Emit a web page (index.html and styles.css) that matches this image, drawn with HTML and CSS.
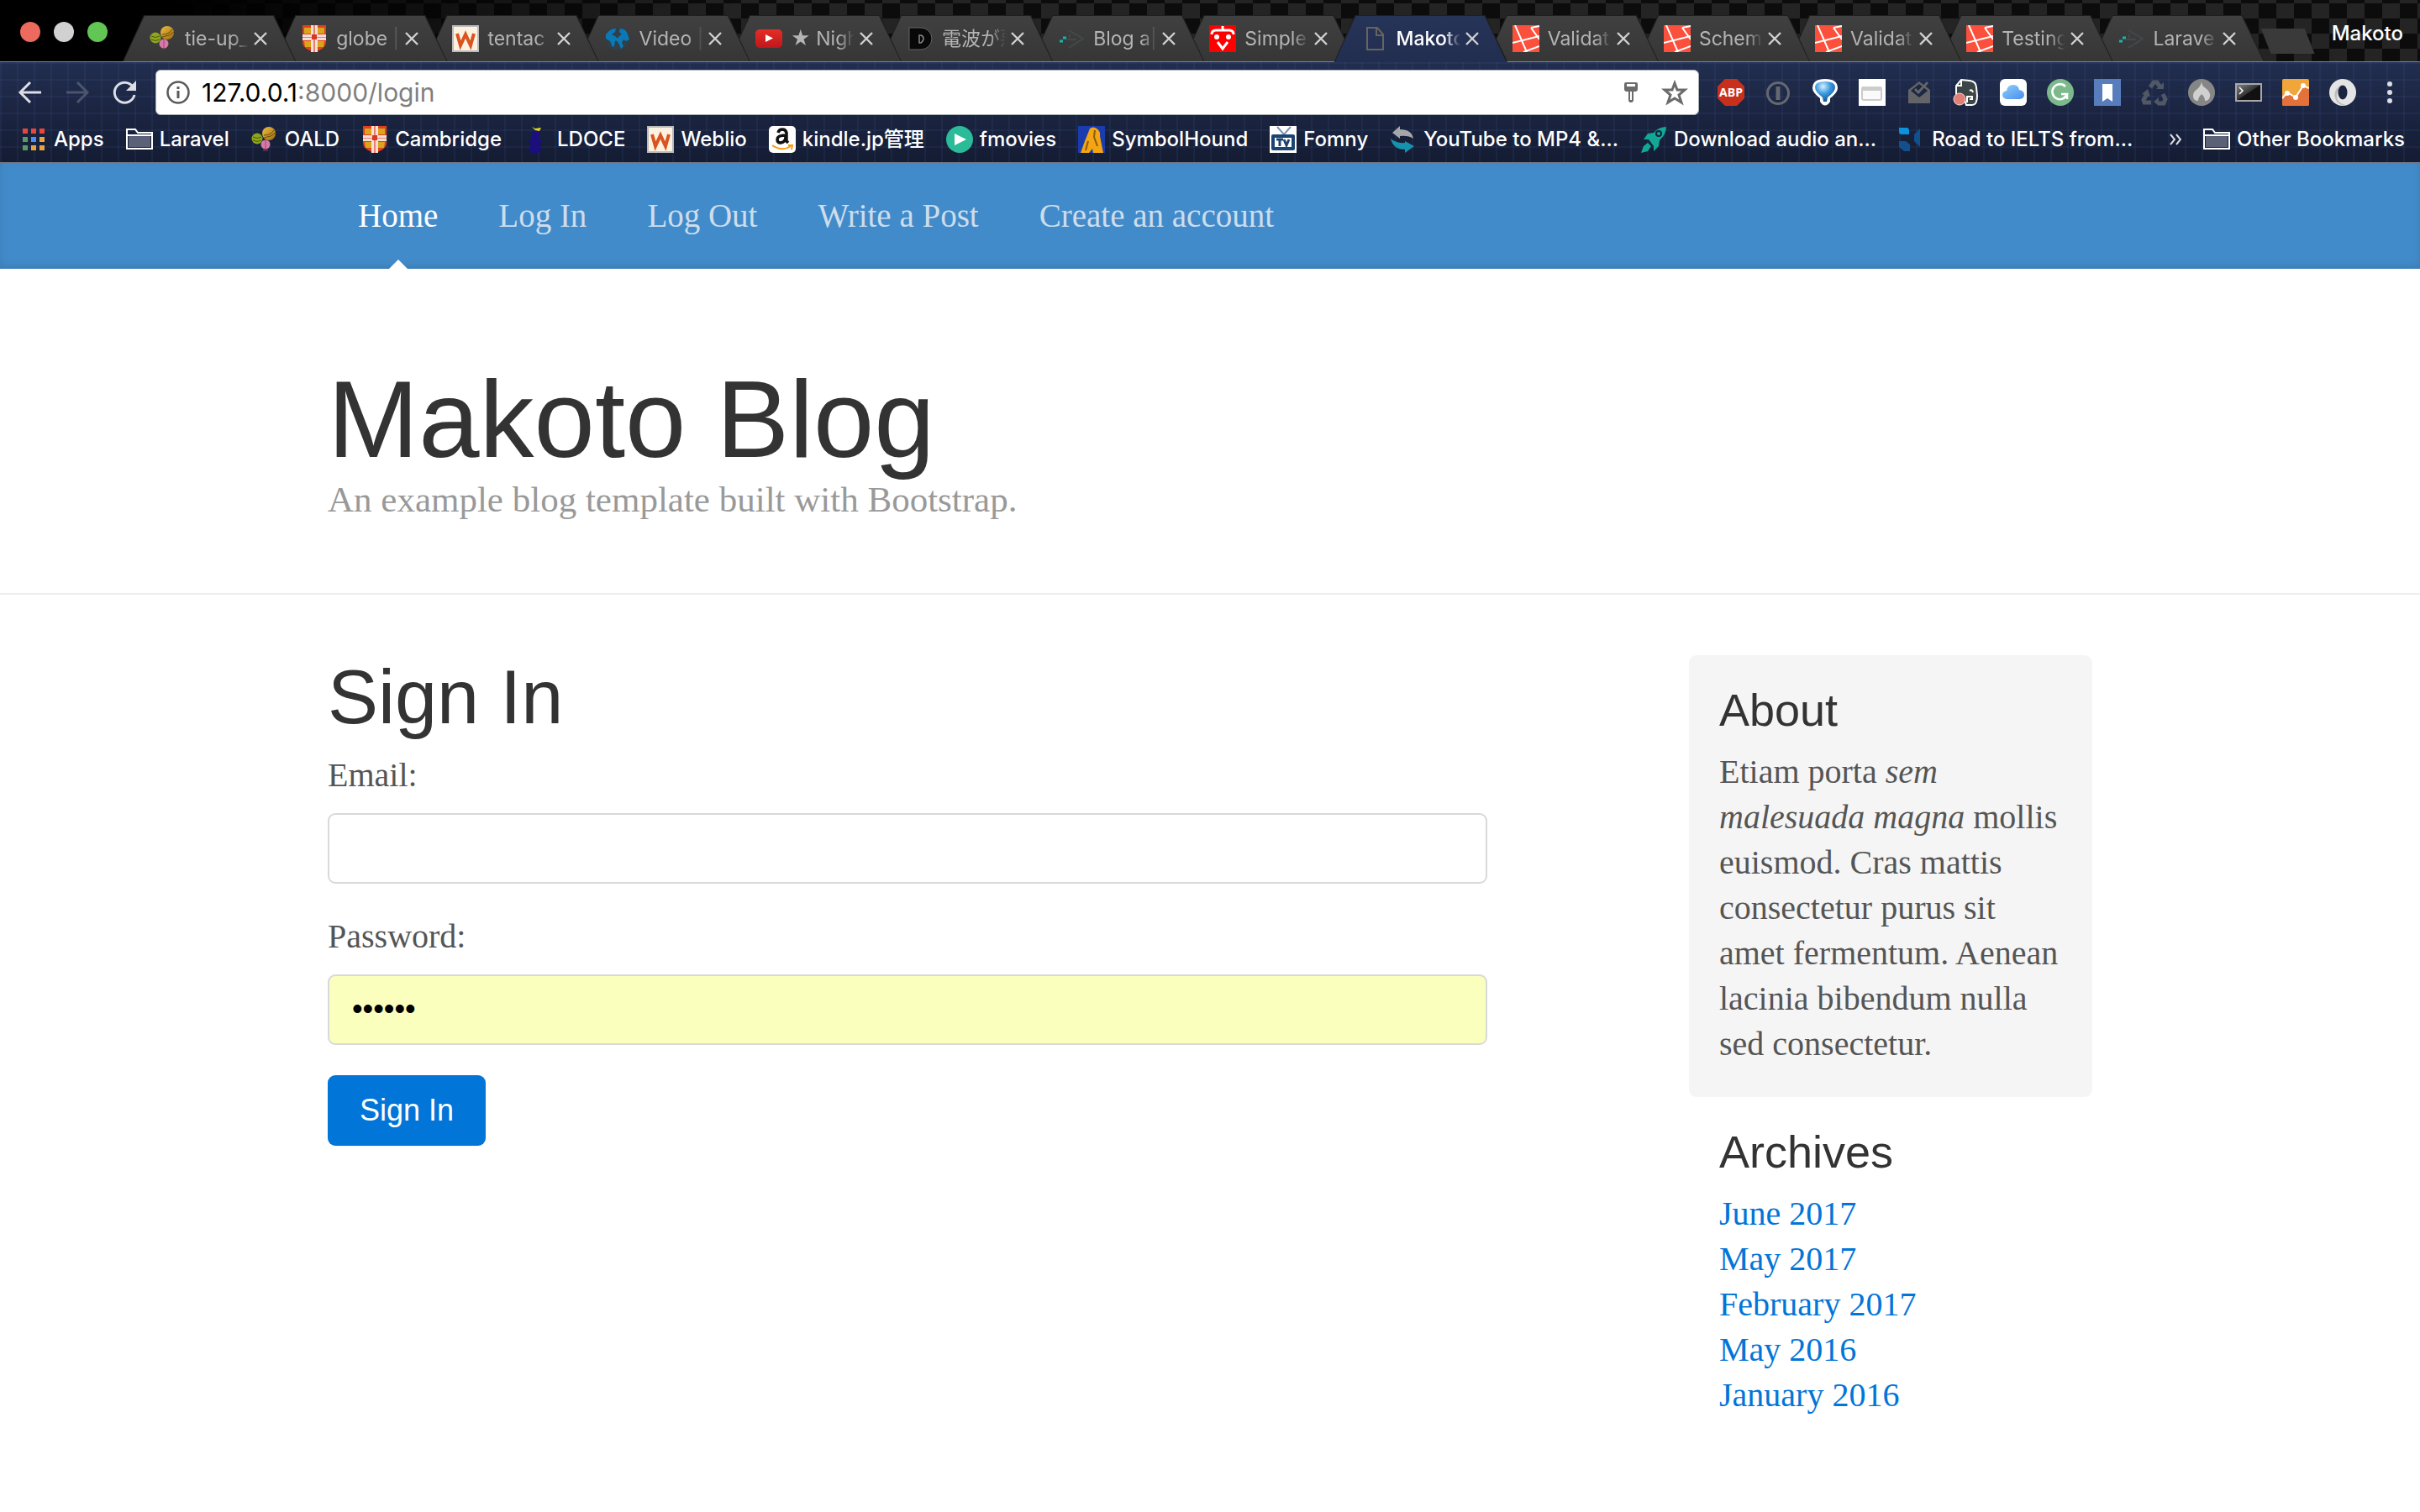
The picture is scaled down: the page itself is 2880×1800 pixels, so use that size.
FILE: index.html
```html
<!DOCTYPE html>
<html lang="en">
<head>
<meta charset="utf-8">
<title>Makoto Blog</title>
<link rel="stylesheet" href="styles.css">
</head>
<body>
<svg class="defs" aria-hidden="true">
  <defs>
    <linearGradient id="g-gold" x1="0" y1="0" x2="1" y2="1"><stop offset="0" stop-color="#f0c040"/><stop offset="1" stop-color="#9a6a10"/></linearGradient>
    <linearGradient id="g-red" x1="0" y1="0" x2="0" y2="1"><stop offset="0" stop-color="#e52d27"/><stop offset="1" stop-color="#bf171d"/></linearGradient>
    <linearGradient id="g-term" x1="0" y1="0" x2="1" y2="1"><stop offset="0" stop-color="#888"/><stop offset=".5" stop-color="#333"/><stop offset=".52" stop-color="#111"/><stop offset="1" stop-color="#111"/></linearGradient>
    <linearGradient id="g-cloud" x1="0" y1="0" x2="1" y2="1"><stop offset="0" stop-color="#8fd0f8"/><stop offset="1" stop-color="#4a8df0"/></linearGradient>
    <radialGradient id="g-drop" cx=".4" cy=".25" r=".8"><stop offset="0" stop-color="#d8f0ff"/><stop offset=".45" stop-color="#3c9be0"/><stop offset="1" stop-color="#0a4a90"/></radialGradient>
  </defs>
  <symbol id="i-balls" viewBox="0 0 32 32"><circle cx="21" cy="9" r="8" fill="url(#g-gold)"/><path d="M15 11q8 0 12-6M15 14q9-1 14-6" stroke="#6b4a08" fill="none"/><circle cx="7" cy="15" r="6.500" fill="#8fa51c"/><path d="M2 13q5 3 10 0M2 17q5 3 10 0" stroke="#4d5c08" fill="none"/><circle cx="17" cy="22" r="5.500" fill="#d77aa8"/><path d="M17 17v10" stroke="#a34677"/><path d="M14 29h6" stroke="#5a2c46" stroke-width="2"/></symbol>
  <symbol id="i-shield" viewBox="0 0 32 32"><path d="M2 0h28v20q0 8-14 12Q2 28 2 20z" fill="#e2401c"/><path d="M4 3h8v7H4zM20 3h8v7h-8zM4 19h8v7H5zM20 19h8l-1 7h-7z" fill="#d8a51c"/><path d="M12 0h8v32h-8zM2 11h28v7H2z" fill="#f6ded6"/><path d="M15 0h2v32h-2zM2 14h28v1H2z" fill="#e88070"/><path d="M13 11h6v6h-6z" fill="#d63a22"/></symbol>
  <symbol id="i-w" viewBox="0 0 32 32"><rect x="1" y="1" width="30" height="30" fill="#fdf1e2" stroke="#bbb" stroke-width="2"/><path d="M6 10l4 14 6-13 6 13 4-14" fill="none" stroke="#d9541e" stroke-width="4"/></symbol>
  <symbol id="i-globe" viewBox="0 0 32 32"><circle cx="16" cy="16" r="14" fill="#303f4a"/><path d="M2 11q6-8 12-7l-1 4-4 3 4 2 3 3-3 3-1 6-2 1-3-7-5-3zM19 4q7 0 9 7l2 6-4 2-3-2-2 4 2 4-3 3-3-7-3-3 4-5 3-2-3-3z" fill="#0b79b5"/></symbol>
  <symbol id="i-yt" viewBox="0 0 32 32"><rect y="5" width="32" height="22" rx="5" fill="url(#g-red)"/><path d="M12 11v9l9-4.500z" fill="#fff"/></symbol>
  <symbol id="i-d" viewBox="0 0 32 32"><path d="M3 3h14a13 13 0 0 1 0 26H3z" fill="#080808" stroke="#666"/><path d="M15 12h2q3 1 3 4t-3 5h-2z" fill="none" stroke="#888" stroke-width="1.500"/></symbol>
  <symbol id="i-arrow" viewBox="0 0 32 32"><path d="M13 6l17 10-17 11M14 11v4M10 17h12" fill="none" stroke="#444849" stroke-width="2"/><path d="M2 19h4M6 15h4" stroke="#12b5b0" stroke-width="3"/></symbol>
  <symbol id="i-face" viewBox="0 0 32 32"><path d="M0 0h32v32H0z" fill="red"/><path d="M3 11q0-5 5-5h16q5 0 5 5M16 1v5M10 20l6 8 6-8" fill="none" stroke="#fff" stroke-width="3"/><circle cx="9" cy="14" r="3" fill="#fff"/><circle cx="23" cy="14" r="3" fill="#fff"/></symbol>
  <symbol id="i-page" viewBox="0 0 32 32"><path d="M7 3h12l7 8v18H7zM18 3v9h8" fill="none" stroke="#66645f" stroke-width="2"/></symbol>
  <symbol id="i-laravel" viewBox="0 0 32 32"><path d="M0 0h32v32H0z" fill="#fb503b"/><path d="M3 0l14 32M0 21l32-8M22 3l10 14M22 3l10-2M13 32l19-7" fill="none" stroke="#fff" stroke-width="2"/></symbol>
  <symbol id="i-x" viewBox="0 0 16 16"><path d="M1 1l14 14M15 1L1 15" stroke="#d0d0d0" stroke-width="2.400"/></symbol>
  <symbol id="i-folder" viewBox="0 0 32 32"><path d="M1 27V4h10l3 4h17v19z" fill="none" stroke="#fff" stroke-width="2"/><path d="M3 12h26v13H3z" fill="#5b6277"/><path d="M1 11h30" stroke="#fff" stroke-width="2"/></symbol>
  <symbol id="i-apps" viewBox="0 0 32 32"><path d="M3 3h6v6H3zM13 3h6v6h-6zM23 3h6v6h-6z" fill="#e8453c"/><path d="M3 13h6v6H3zM3 23h6v6H3z" fill="#589b63"/><path d="M13 13h6v6h-6z" fill="#4a8df6"/><path d="M23 13h6v6h-6zM13 23h6v6h-6zM23 23h6v6h-6z" fill="#e8a33c"/></symbol>
  <symbol id="i-ship" viewBox="0 0 32 32"><path d="M10 7h10l-2 7 4 3-3 6 3 4-4 5h-8l-5-4 4-4-3-5 4-3z" fill="#1a0f7c"/><path d="M10 1l4 2 7-1-2 4-5-1z" fill="#e8d820"/></symbol>
  <symbol id="i-amazon" viewBox="0 0 32 32"><rect width="32" height="32" rx="5" fill="#fff"/><path d="M11 8q1-4 5-4t5 4v10l2 2M20 11q-10 0-10 5 0 4 4 4 6-1 6-7" fill="none" stroke="#111" stroke-width="3.500"/><path d="M4 23q12 8 22 1M23 23h5l-1 5" fill="none" stroke="#f79b12" stroke-width="2"/></symbol>
  <symbol id="i-play" viewBox="0 0 32 32"><circle cx="16" cy="16" r="16" fill="#2bbb98"/><path d="M10 9v14l14-7z" fill="#fff"/></symbol>
  <symbol id="i-hound" viewBox="0 0 32 32"><path d="M0 0h32v32H0z" fill="#1a3cae"/><path d="M14 3q4-3 8 0 5 3 4 9l4 20H18l-1-5-4 5H3l5-14z" fill="#f3a512"/><path d="M20 5l-1 8 4 11M12 18l-3 11" fill="none" stroke="#8a5a10" stroke-width="2"/></symbol>
  <symbol id="i-tv" viewBox="0 0 32 32"><path d="M0 0h32v32H0z" fill="#fff"/><path d="M9 1l8 9 8-9" fill="none" stroke="#7b95b4" stroke-width="2"/><rect x="2" y="10" width="28" height="19" rx="2" fill="#1d4470"/><path d="M6 14h20v11H6z" fill="#fff"/><path d="M8 16h8M12 16v8M17 16l3 7 3-7" fill="none" stroke="#1d4470" stroke-width="3"/></symbol>
  <symbol id="i-swap" viewBox="0 0 32 32"><path d="M3 8l9-8v4q14 0 16 11-6-4-16-3v3z" fill="#a5a7aa"/><path d="M29 24l-11 8v-4Q4 28 1 15q7 6 17 5v-2z" fill="#1792ac"/></symbol>
  <symbol id="i-rocket" viewBox="0 0 32 32"><path d="M31 1q-9 0-15 7L9 9l-5 7h6l6 8v6l6-6 1-7q8-7 8-16zM9 20l4 4-4 6-8 2 3-8z" fill="#13a795"/><circle cx="22" cy="9" r="3" fill="none" stroke="#17223d" stroke-width="2"/></symbol>
  <symbol id="i-road" viewBox="0 0 32 32"><path d="M1 2h10l2 2v6H3L1 8z" fill="#0c92dc"/><path d="M1 18h8l5 4v8H7l-6-5zM26 3v22l-7-7v-8z" fill="#124f8c"/></symbol>
  <symbol id="i-abp" viewBox="0 0 32 32"><path d="M9 0h14l9 9v14l-9 9H9l-9-9V9z" fill="#c9301c"/><text x="16" y="21" text-anchor="middle" class="abp">ABP</text></symbol>
  <symbol id="i-onep" viewBox="0 0 32 32"><circle cx="16" cy="17" r="12.500" fill="none" stroke="#65686f" stroke-width="3"/><path d="M16 9v16" stroke="#65686f" stroke-width="5"/></symbol>
  <symbol id="i-drop" viewBox="0 0 32 32"><path d="M16 0q15 0 15 11 0 5-9 12v4q-6 9-12 0v-4Q1 16 1 11 1 0 16 0z" fill="#fff"/><path d="M16 3q12 0 12 7 0 5-9 12l-1 5h-4l-1-5Q4 15 4 10q0-7 12-7z" fill="url(#g-drop)"/></symbol>
  <symbol id="i-window" viewBox="0 0 32 32"><path d="M0 0h32v32H0z" fill="#fff"/><rect x="4" y="10" width="23" height="15" rx="2" fill="#fafafa" stroke="#ccc" stroke-width="2"/><path d="M4 9h23v5H4z" fill="#ccc"/></symbol>
  <symbol id="i-inbox" viewBox="0 0 32 32"><path d="M3 13L16 3l13 10v16H3z" fill="#626467"/><path d="M6 14l10-8 10 8-10 8z" fill="#1d2742"/><path d="M11 12l4 4L26 4" fill="none" stroke="#626467" stroke-width="3"/></symbol>
  <symbol id="i-elephant" viewBox="0 0 32 32"><path d="M10 1l10 1q8 1 8 8l1 10q0 11-6 11h-7l-2-6-10-4V8z" fill="#3c4646" stroke="#fff" stroke-width="2"/><path d="M4 8h6V1M17 28v-7h6v3h-3" fill="none" stroke="#fff" stroke-width="2"/><path d="M20 14q3-2 4 2" stroke="#fff" fill="none" stroke-width="2"/><circle cx="8" cy="24" r="7" fill="#e27f77" stroke="#f6dcda"/></symbol>
  <symbol id="i-cloud" viewBox="0 0 32 32"><rect width="32" height="32" rx="6" fill="#fff"/><path d="M8 24q-5-1-5-5 0-4 5-5 1-7 8-7 6 0 7 6 6 1 6 6 0 4-5 5z" fill="url(#g-cloud)"/></symbol>
  <symbol id="i-gram" viewBox="0 0 32 32"><circle cx="16" cy="16" r="16" fill="#7cba8c"/><path d="M22 9a9 9 0 1 0 2 9h-7M24 18v6" fill="none" stroke="#fff" stroke-width="2.600"/></symbol>
  <symbol id="i-mark" viewBox="0 0 32 32"><path d="M0 0h32v32H0z" fill="#587dbd"/><path d="M10 6h12v21l-6-4-6 4z" fill="#fff"/></symbol>
  <symbol id="i-recycle" viewBox="0 0 32 32"><path d="M11 10l4-6h4l4 6M26 18l3 6-2 5h-6M12 28H4l-1-3 4-7" fill="none" stroke="#505866" stroke-width="5"/><path d="M18 12h9V4zM21 22v10l-6-5zM1 18l7-6 3 9z" fill="#505866"/></symbol>
  <symbol id="i-fire" viewBox="0 0 32 32"><circle cx="16" cy="16" r="16" fill="#868686"/><path d="M16 3q0 5 5 8 6 5 5 10-1 5-6 5 0-5-4-8-4 4-4 8-6 0-6-6 0-5 5-8 4-3 5-9z" fill="#d0d0d0"/></symbol>
  <symbol id="i-term" viewBox="0 0 32 32"><path d="M1 6h30v20H1z" fill="url(#g-term)" stroke="#a8a8a8" stroke-width="2"/><path d="M5 10l4 4-4 4" fill="none" stroke="#fff" stroke-width="1.500"/></symbol>
  <symbol id="i-chart" viewBox="0 0 32 32"><rect width="32" height="32" rx="2" fill="#f0a63a"/><path d="M0 24l6-8 10 6 9-14 7 3v19q0 2-2 2H2q-2 0-2-2z" fill="#e5713a"/><path d="M0 23l6-7 10 6 9-14 7 3" fill="none" stroke="#fff" stroke-width="2"/><circle cx="6" cy="17" r="3" fill="#fff"/><circle cx="16" cy="22" r="3" fill="#fff"/><circle cx="25" cy="8" r="3" fill="#fff"/></symbol>
  <symbol id="i-ring" viewBox="0 0 32 32"><circle cx="16" cy="16" r="16" fill="#e4e4e4"/><path d="M14 7q-12 8-5 20 4 5 10 4Q2 26 14 7z" fill="#bdbdbd"/><ellipse cx="16" cy="16" rx="5.500" ry="8.500" fill="#1b2540"/></symbol>
</svg>

<div class="browser">
  <div class="tabstrip">
    <div class="lights"><button class="light red" aria-label="Close"></button><button class="light gray" aria-label="Minimize"></button><button class="light green" aria-label="Zoom"></button></div>
    <div class="tabs">
      <div class="tab first"><svg class="ico"><use href="#i-balls"/></svg><span class="tab-title">tie-up_</span><button class="close" aria-label="Close tab"><svg><use href="#i-x"/></svg></button></div>
      <div class="tab"><svg class="ico"><use href="#i-shield"/></svg><span class="tab-title">globe |</span><button class="close" aria-label="Close tab"><svg><use href="#i-x"/></svg></button></div>
      <div class="tab"><svg class="ico"><use href="#i-w"/></svg><span class="tab-title">tentac</span><button class="close" aria-label="Close tab"><svg><use href="#i-x"/></svg></button></div>
      <div class="tab"><svg class="ico"><use href="#i-globe"/></svg><span class="tab-title">Video |</span><button class="close" aria-label="Close tab"><svg><use href="#i-x"/></svg></button></div>
      <div class="tab"><svg class="ico"><use href="#i-yt"/></svg><span class="tab-title">★ Nigh</span><button class="close" aria-label="Close tab"><svg><use href="#i-x"/></svg></button></div>
      <div class="tab"><svg class="ico"><use href="#i-d"/></svg><span class="tab-title">電波が悪</span><button class="close" aria-label="Close tab"><svg><use href="#i-x"/></svg></button></div>
      <div class="tab"><svg class="ico"><use href="#i-arrow"/></svg><span class="tab-title">Blog a|</span><button class="close" aria-label="Close tab"><svg><use href="#i-x"/></svg></button></div>
      <div class="tab"><svg class="ico"><use href="#i-face"/></svg><span class="tab-title">Simple</span><button class="close" aria-label="Close tab"><svg><use href="#i-x"/></svg></button></div>
      <div class="tab active"><svg class="ico"><use href="#i-page"/></svg><span class="tab-title">Makoto</span><button class="close" aria-label="Close tab"><svg><use href="#i-x"/></svg></button></div>
      <div class="tab"><svg class="ico"><use href="#i-laravel"/></svg><span class="tab-title">Validat</span><button class="close" aria-label="Close tab"><svg><use href="#i-x"/></svg></button></div>
      <div class="tab"><svg class="ico"><use href="#i-laravel"/></svg><span class="tab-title">Schem</span><button class="close" aria-label="Close tab"><svg><use href="#i-x"/></svg></button></div>
      <div class="tab"><svg class="ico"><use href="#i-laravel"/></svg><span class="tab-title">Validat</span><button class="close" aria-label="Close tab"><svg><use href="#i-x"/></svg></button></div>
      <div class="tab"><svg class="ico"><use href="#i-laravel"/></svg><span class="tab-title">Testing</span><button class="close" aria-label="Close tab"><svg><use href="#i-x"/></svg></button></div>
      <div class="tab"><svg class="ico"><use href="#i-arrow"/></svg><span class="tab-title">Larave</span><button class="close" aria-label="Close tab"><svg><use href="#i-x"/></svg></button></div>
    </div>
    <button class="newtab" aria-label="New tab"></button>
    <span class="profile">Makoto</span>
  </div>

  <div class="chrome">
    <div class="toolbar">
      <div class="history">
        <button aria-label="Back"><svg viewBox="0 0 32 32"><path d="M29 16H5M16 4L4 16l12 12" fill="none" stroke="#dcdee4" stroke-width="3"/></svg></button>
        <button aria-label="Forward"><svg viewBox="0 0 32 32"><path d="M3 16h24M16 4l12 12-12 12" fill="none" stroke="#4b556d" stroke-width="3"/></svg></button>
        <button aria-label="Reload"><svg viewBox="0 0 32 32"><path d="M26 9a12 12 0 1 0 2 10" fill="none" stroke="#dcdee4" stroke-width="3"/><path d="M30 2v12H18z" fill="#dcdee4"/></svg></button>
      </div>
      <div class="omnibox">
        <svg class="info" viewBox="0 0 28 28"><circle cx="14" cy="14" r="12.500" fill="none" stroke="#5a5a5a" stroke-width="2.500"/><path d="M14 12v9M14 7v3" stroke="#5a5a5a" stroke-width="3"/></svg>
        <div class="url" role="textbox" aria-label="Address">127.0.0.1<span>:8000/login</span></div>
        <svg class="key" viewBox="0 0 32 32"><path d="M10 4h12q2 0 2 2v6q0 3-3 3h-2v10q0 3-3 3t-3-3V15h-2q-3 0-3-3V6q0-2 2-2zm1 2v3h10V6zm4 9v10h2V15z" fill="#6b6b6b" fill-rule="evenodd"/></svg>
        <svg class="star" viewBox="0 0 32 32"><path d="M16 5l3 8h9l-7 6 3 9-8-5-8 5 3-9-7-6h9z" fill="none" stroke="#6b6b6b" stroke-width="3"/></svg>
      </div>
      <div class="extensions">
        <svg class="ico"><use href="#i-abp"/></svg><svg class="ico"><use href="#i-onep"/></svg><svg class="ico"><use href="#i-drop"/></svg><svg class="ico"><use href="#i-window"/></svg><svg class="ico"><use href="#i-inbox"/></svg><svg class="ico"><use href="#i-elephant"/></svg><svg class="ico"><use href="#i-cloud"/></svg><svg class="ico"><use href="#i-gram"/></svg><svg class="ico"><use href="#i-mark"/></svg><svg class="ico"><use href="#i-recycle"/></svg><svg class="ico"><use href="#i-fire"/></svg><svg class="ico"><use href="#i-term"/></svg><svg class="ico"><use href="#i-chart"/></svg><svg class="ico"><use href="#i-ring"/></svg>
        <button aria-label="Menu"><svg class="ico" viewBox="0 0 32 32"><g fill="#dcdee4"><circle cx="16" cy="6" r="3"/><circle cx="16" cy="16" r="3"/><circle cx="16" cy="26" r="3"/></g></svg></button>
      </div>
    </div>
    <div class="bookmarks">
      <a href="#"><svg class="ico"><use href="#i-apps"/></svg>Apps</a>
      <a href="#"><svg class="ico"><use href="#i-folder"/></svg>Laravel</a>
      <a href="#"><svg class="ico"><use href="#i-balls"/></svg>OALD</a>
      <a href="#"><svg class="ico"><use href="#i-shield"/></svg>Cambridge</a>
      <a href="#"><svg class="ico"><use href="#i-ship"/></svg>LDOCE</a>
      <a href="#"><svg class="ico"><use href="#i-w"/></svg>Weblio</a>
      <a href="#"><svg class="ico"><use href="#i-amazon"/></svg>kindle.jp管理</a>
      <a href="#"><svg class="ico"><use href="#i-play"/></svg>fmovies</a>
      <a href="#"><svg class="ico"><use href="#i-hound"/></svg>SymbolHound</a>
      <a href="#"><svg class="ico"><use href="#i-tv"/></svg>Fomny</a>
      <a href="#"><svg class="ico"><use href="#i-swap"/></svg>YouTube to MP4 &amp;...</a>
      <a href="#"><svg class="ico"><use href="#i-rocket"/></svg>Download audio an...</a>
      <a href="#"><svg class="ico"><use href="#i-road"/></svg>Road to IELTS from...</a>
      <button class="more" aria-label="More bookmarks"><svg viewBox="0 0 14 14"><path d="M1 1l5 6-5 6M8 1l5 6-5 6" fill="none" stroke="#dcdee4" stroke-width="2"/></svg></button>
      <a href="#"><svg class="ico"><use href="#i-folder"/></svg>Other Bookmarks</a>
    </div>
  </div>
</div>

<nav class="masthead">
  <div class="container links">
    <a class="current" href="#">Home</a>
    <a href="#">Log In</a>
    <a href="#">Log Out</a>
    <a href="#">Write a Post</a>
    <a href="#">Create an account</a>
  </div>
</nav>

<header class="blog-header">
  <div class="container">
    <h1>Makoto Blog</h1>
    <p>An example blog template built with Bootstrap.</p>
  </div>
</header>

<div class="container columns">
  <main>
    <h2>Sign In</h2>
    <form>
      <label for="email">Email:</label>
      <input id="email" type="email">
      <label for="password">Password:</label>
      <input id="password" class="filled" type="password" value="secret">
      <button class="submit" type="button">Sign In</button>
    </form>
  </main>
  <aside>
    <section class="box inset">
      <h3>About</h3>
      <p>Etiam porta <em>sem malesuada magna</em> mollis euismod. Cras mattis consectetur purus sit amet fermentum. Aenean lacinia bibendum nulla sed consectetur.</p>
    </section>
    <section class="box">
      <h3>Archives</h3>
      <ul>
        <li><a href="#">June 2017</a></li>
        <li><a href="#">May 2017</a></li>
        <li><a href="#">February 2017</a></li>
        <li><a href="#">May 2016</a></li>
        <li><a href="#">January 2016</a></li>
      </ul>
    </section>
  </aside>
</div>
</body>
</html>
```
FILE: styles.css
```css
* { box-sizing: border-box; }

body {
  margin: 0;
  background: #fff;
  color: #555;
  font: 40px/54px "Liberation Serif", serif;
}

h1, h2, h3, p, ul { margin: 0; padding: 0; font-weight: 400; }
h1, h2, h3 { font-family: "Liberation Sans", sans-serif; color: #333; }
ul { list-style: none; }
a { color: #0275d8; text-decoration: none; }
button { border: 0; padding: 0; background: none; }
svg { display: block; }
.defs { position: absolute; width: 0; height: 0; }
.ico { width: 32px; height: 32px; flex: none; }
.abp { font: 700 14px "Open Sans", sans-serif; fill: #fff; }

/* Browser window */
.browser { font: 500 24px/32px Inter, "Noto Sans CJK JP", sans-serif; color: #fff; }

.tabstrip {
  display: flex;
  height: 74px;
  padding-right: 20px;
  border-bottom: 1px solid #808285;
  background:
    linear-gradient(to right, #000 200px, transparent 900px),
    repeating-conic-gradient(#242424 0 25%, #0c0c0c 0 50%) 0 4px / 42px 36px;
}
.lights { display: flex; flex: none; gap: 16px; width: 146px; padding: 26px 0 0 24px; }
.light { width: 24px; height: 24px; border-radius: 50%; }
.red { background: #ed6a5e; }
.gray { background: #d1d1d1; }
.green { background: #61c654; }

.tabs { display: flex; flex: 1; align-items: flex-start; min-width: 0; padding-right: 26px; margin-top: 18px; }
.tab {
  position: relative;
  display: flex;
  flex: 1 1 0;
  align-items: center;
  min-width: 0;
  height: 55px;
  margin-right: -26px;
  padding: 0 34px 0 32px;
  background: #1f1f1f;
  clip-path: polygon(25px 0, calc(100% - 26px) 0, 100% 100%, 26px 100%, 13px 50%);
  color: #b4b4b4;
  font-weight: 400;
}
.tab::before {
  content: "";
  position: absolute;
  inset: 1px 1px 0;
  background: linear-gradient(#404040, #363636);
  clip-path: polygon(25px 0, calc(100% - 26px) 0, 100% 100%, 0 100%);
}
.tab > * { position: relative; }
.tab.first { clip-path: polygon(25px 0, calc(100% - 26px) 0, 100% 100%, 0 100%); }
.tab.active {
  height: 56px;
  color: #fff;
  font-weight: 500;
  clip-path: polygon(25px 0, calc(100% - 26px) 0, 100% 100%, 0 100%);
}
.tab.active::before { background: linear-gradient(#263458, #222e50); }
.tab-title {
  flex: 1;
  min-width: 0;
  margin: 0 6px 0 10px;
  overflow: hidden;
  white-space: nowrap;
  font-size: 23px;
  mask-image: linear-gradient(to right, #000 75%, transparent);
}
.close svg { width: 16px; height: 16px; }
.newtab {
  flex: none;
  width: 64px;
  height: 30px;
  margin: 34px 20px 0 -4px;
  background: #3a3a3a;
  clip-path: polygon(0 0, 52px 0, 100% 100%, 12px 100%);
}
.profile { padding-top: 24px; }

.chrome {
  height: 120px;
  border-bottom: 1px solid #6f7684;
  background:
    repeating-linear-gradient(to right, rgba(80, 110, 180, .1) 0 2px, transparent 2px 20px),
    repeating-linear-gradient(rgba(80, 110, 180, .1) 0 2px, transparent 2px 20px),
    linear-gradient(#222e50, #141c33);
}
.toolbar { display: flex; align-items: center; padding: 9px 20px 0 20px; }
.history { display: flex; flex: none; gap: 24px; width: 165px; }
.history svg { width: 32px; height: 32px; }
.omnibox {
  display: flex;
  flex: 1;
  align-items: center;
  height: 54px;
  margin-right: 22px;
  padding: 0 12px 0 12px;
  border: 1px solid #a9b0b0;
  border-radius: 6px;
  background: #fff;
}
.info { width: 28px; height: 28px; margin-right: 14px; }
.url { flex: 1; color: #000; font-size: 30px; font-weight: 400; }
.url span { color: #7f7f7f; }
.key, .star { width: 32px; height: 32px; margin-left: 20px; }
.extensions { display: flex; flex: none; gap: 24px; }

.bookmarks {
  display: flex;
  align-items: center;
  gap: 26px;
  margin-top: 13px;
  padding: 0 18px 0 24px;
}
.bookmarks a { display: flex; gap: 8px; color: #fff; white-space: nowrap; }
.more { margin-left: auto; }
.more svg { width: 14px; height: 14px; }

/* Blog */
.container { max-width: 2100px; margin: 0 auto; }

.masthead { background: #428bca; box-shadow: inset 0 -4px 10px rgba(0, 0, 0, .1); }
.links { display: flex; font-size: 39px; }
.links a { position: relative; padding: 36px; color: #cdddeb; }
.links .current { color: #fff; }
.links .current::after {
  content: "";
  position: absolute;
  bottom: 0;
  left: 50%;
  margin-left: -11px;
  border: 11px solid transparent;
  border-top: 0;
  border-bottom-color: #fff;
}

.blog-header { padding: 110px 0 84px; border-bottom: 2px solid #eee; }
.blog-header h1 { font-size: 130px; line-height: 138px; }
.blog-header p { color: #999; font-size: 43px; }

.columns { display: grid; grid-template-columns: minmax(0, 1fr) 480px; gap: 240px; padding: 72px 0; }
main h2 { margin-bottom: 16px; font-size: 90px; line-height: 100px; }
form { display: flex; flex-direction: column; align-items: flex-start; }
form label { margin-bottom: 18px; }
form input {
  width: 100%;
  height: 84px;
  margin-bottom: 36px;
  padding: 0 27px 2px;
  border: 2px solid #d9d9d9;
  border-radius: 9px;
  background: #fff;
  color: #000;
  font: 36px "Liberation Sans", sans-serif;
}
form .filled { background: #faffbd; }
.submit {
  height: 84px;
  padding: 0 38px;
  border-radius: 9px;
  background: #0275d8;
  color: #fff;
  font: 36px "Liberation Sans", sans-serif;
}

.box { padding: 36px; }
.inset { border-radius: 9px; background: #f5f5f5; }
.box h3 { margin-bottom: 18px; font-size: 54px; line-height: 58px; }
```
